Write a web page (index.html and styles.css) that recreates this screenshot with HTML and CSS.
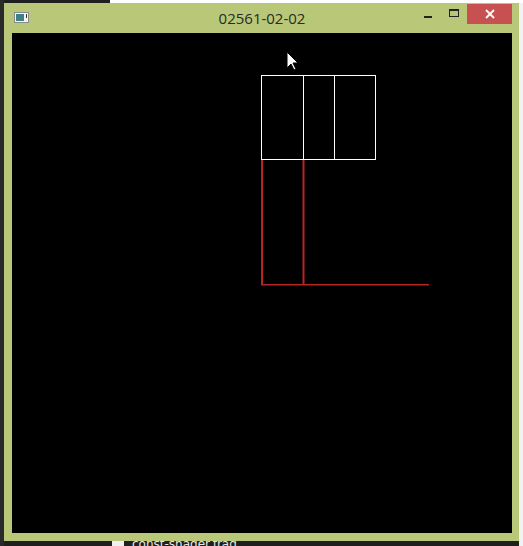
FILE: index.html
```html
<!DOCTYPE html>
<html>
<head>
<meta charset="utf-8">
<link rel="stylesheet" href="styles.css">
</head>
<body>
<div class="desktop">
  <div class="topstrip"></div>
  <div class="window">
    <div class="titlebar">
      <svg class="appicon" width="15" height="11" viewBox="0 0 15 11">
        <rect x="0.5" y="0.5" width="14" height="10" fill="#f4f4f4" stroke="#8a8a8a"/>
        <rect x="2" y="2" width="8" height="7" fill="#3f7f86"/>
        <rect x="12" y="2" width="1" height="4" fill="#333"/>
      </svg>
      <div class="title">02561-02-02</div>
      <div class="controls">
        <div class="btn minbtn"><span class="minline"></span></div>
        <div class="btn maxbtn"><span class="maxbox"></span></div>
        <div class="btn closebtn">
          <svg width="10" height="10" viewBox="0 0 10 10"><path d="M1 1L9 9M9 1L1 9" stroke="#fff" stroke-width="1.8"/></svg>
        </div>
      </div>
    </div>
    <div class="client">
      <svg class="scene" width="500" height="500" viewBox="0 0 500 500">
        <g fill="#b82424">
          <rect x="249" y="126" width="2" height="126"/>
          <rect x="290.5" y="126" width="2" height="126"/>
          <rect x="249" y="251" width="168" height="1.5"/>
        </g>
        <g fill="#ffffff">
          <rect x="249" y="42" width="115" height="1"/>
          <rect x="249" y="126" width="115" height="1"/>
          <rect x="249" y="42" width="1" height="85"/>
          <rect x="363" y="42" width="1" height="85"/>
          <rect x="291" y="42" width="1" height="85"/>
          <rect x="322" y="42" width="1" height="85"/>
        </g>
        <path d="M275 19 L275 35 L279 31 L282 37 L284 36 L281 30 L286 30 Z" fill="#fff" stroke="#000" stroke-width="1"/>
      </svg>
    </div>
  </div>
  <div class="bottomstrip"><span class="fileicon"></span><span class="filename">const-shader.frag</span></div>
</div>
</body>
</html>
```
FILE: styles.css
```css
html, body {
  margin: 0;
  padding: 0;
}
body {
  width: 523px;
  height: 546px;
  overflow: hidden;
  background: #1f1f1f;
  font-family: "Open Sans", "Noto Sans", sans-serif;
}
.desktop {
  position: relative;
  width: 523px;
  height: 546px;
  background: linear-gradient(to right, #2a2a2a 0 4px, #1f1f1f 4px 519px, #f2f2f2 519px);
}
.topstrip {
  height: 3px;
  margin-left: 110px;
  background: #ffffff;
}
.window {
  margin-left: 4px;
  width: 515px;
  height: 538px;
  background: #b8c878;
  display: flex;
  flex-direction: column;
  box-sizing: border-box;
  padding: 0 7px 8px 8px;
}
.titlebar {
  height: 30px;
  display: flex;
  align-items: flex-start;
  position: relative;
}
.appicon {
  margin-top: 9px;
  margin-left: 2px;
}
.title {
  position: absolute;
  left: 0;
  right: 0;
  top: 5px;
  text-align: center;
  font-size: 15px;
  color: #2a2a2a;
  line-height: 20px;
}
.controls {
  margin-left: auto;
  display: flex;
  margin-top: 1px;
}
.btn {
  height: 20px;
  display: flex;
  align-items: center;
  justify-content: center;
}
.minbtn {
  width: 26px;
}
.minline {
  width: 8px;
  height: 2px;
  background: #222;
  margin-top: 6px;
}
.maxbtn {
  width: 26px;
}
.maxbox {
  width: 8px;
  height: 5px;
  border: 1px solid #222;
  border-top-width: 2px;
  margin-top: -3px;
}
.closebtn {
  width: 45px;
  background: #c75050;
}
.client {
  flex: 1;
  background: #000;
}
.scene {
  display: block;
}
.bottomstrip {
  height: 5px;
  margin-left: 100px;
  display: flex;
  align-items: flex-start;
  overflow: hidden;
  font-family: "DejaVu Sans", sans-serif;
  font-size: 12px;
  color: #e8e8e8;
  line-height: 12px;
}
.fileicon {
  width: 12px;
  height: 8px;
  background: #f0f0f0;
  margin-left: 12px;
  margin-right: 8px;
}
.filename {
  margin-top: -3px;
}
```
